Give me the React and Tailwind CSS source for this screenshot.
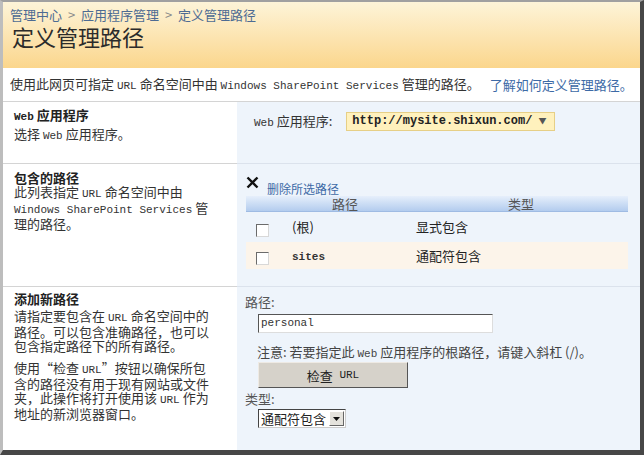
import React from 'react'

const L = ({ children, bold }) => (
  <span className={`font-['Liberation_Mono',monospace] text-[11px] ${bold ? 'font-bold' : ''}`}>{children}</span>
)

const Check = () => (
  <div className="w-[13px] h-[13px] bg-white border border-t-[#6b6b6b] border-l-[#6b6b6b] border-b-[#d8d8d8] border-r-[#d8d8d8]" />
)

function Section({ left, right, h, last }) {
  return (
    <div className={`flex ${h} ${last ? 'flex-1' : ''}`}>
      <div className={`w-[234px] pl-[11px] pr-2 ${last ? '' : 'border-b border-[#d4d4d4]'}`}>{left}</div>
      <div className={`flex-1 bg-[#eef4fb] ${last ? '' : 'border-b border-[#dbe2ec]'}`}>{right}</div>
    </div>
  )
}

export default function App() {
  return (
    <div className="w-[644px] h-[455px] bg-white flex flex-col overflow-hidden border-t-2 border-l-[3px] border-r-4 border-b-[5px] border-t-[#a0a0a0] border-l-[#bdbdbd] border-r-[#474747] border-b-[#474747] font-['Noto_Sans_CJK_SC',sans-serif] text-[13px] text-[#333]">
      <div className="h-[66px] px-[7px] pt-[4px] bg-gradient-to-b from-[#fdf4d8] to-[#fbd68c]">
        <div className="text-[13px] leading-[17px] text-[#4d6b93]">
          管理中心 <span className="text-[#8a8a8a] mx-[3px]">&gt;</span> 应用程序管理 <span className="text-[#8a8a8a] mx-[3px]">&gt;</span> 定义管理路径
        </div>
        <div className="text-[22px] leading-[26px] text-[#2b2b2b] pl-[2px]">定义管理路径</div>
      </div>

      <div className="h-[34px] flex items-center px-[7px] border-b border-[#d4d4d4] whitespace-nowrap">
        <span>
          使用此网页可指定 <L>URL</L> 命名空间中由 <L>Windows SharePoint Services</L> 管理的路径。
        </span>
        <span className="ml-[10px] text-[#3d6aa6]">了解如何定义管理路径。</span>
      </div>

      <Section
        h="h-[62px]"
        left={
          <div className="pt-[5px] leading-[15px]">
            <div className="font-bold text-[#222]"><L bold>Web</L> 应用程序</div>
            <div className="mt-[1px]">选择 <L>Web</L> 应用程序。</div>
          </div>
        }
        right={
          <div className="pl-[17px] pt-[9px] flex items-center">
            <span className="whitespace-nowrap"><L>Web</L> 应用程序:</span>
            <div className="ml-[14px] w-[209px] h-[19px] bg-[#fff1bd] border border-[#e6cf86] flex items-center pl-[5px] gap-[6px]">
              <span className="font-['Liberation_Mono',monospace] text-[12px] font-bold text-[#222]">http://mysite.shixun.com/</span>
              <span className="text-[8px] text-[#555]">▼</span>
            </div>
          </div>
        }
      />

      <Section
        h="h-[123px]"
        left={
          <div className="pt-[6px] leading-[14px]">
            <div className="font-bold text-[#222] leading-[15px]">包含的路径</div>
            <div>此列表指定 <L>URL</L> 命名空间中由</div>
            <div><L>Windows SharePoint Services</L> 管</div>
            <div>理的路径。</div>
          </div>
        }
        right={
          <div className="pl-[9px] pr-[12px] pt-[8px]">
            <div className="flex items-end h-[24px]">
              <svg width="13" height="13" viewBox="0 0 13 13" className="mb-[7px]">
                <path d="M1.5 1.5 L11.5 11.5 M11.5 1.5 L1.5 11.5" stroke="#111" strokeWidth="2.4" />
              </svg>
              <span className="ml-[8px] text-[12px] leading-[15px] text-[#3d6aa6]">删除所选路径</span>
            </div>
            <div className="flex h-[16px] items-center bg-gradient-to-b from-[#e6effb] to-[#b3ccee] border-b border-[#9fbbe3] text-[#555]">
              <div className="w-[30px]" />
              <div className="w-[138px] text-center">路径</div>
              <div className="flex-1 text-center">类型</div>
            </div>
            <div className="flex h-[30px] items-center">
              <div className="w-[30px] pl-[10px] pt-[6px]"><Check /></div>
              <div className="w-[138px] pl-[16px] text-[#222]">(根)</div>
              <div className="flex-1 pl-[2px] text-[#222]">显式包含</div>
            </div>
            <div className="flex h-[27px] items-center bg-[#fcf4ea]">
              <div className="w-[30px] pl-[10px] pt-[6px]"><Check /></div>
              <div className="w-[138px] pl-[16px]"><L bold>sites</L></div>
              <div className="flex-1 pl-[2px] text-[#222]">通配符包含</div>
            </div>
          </div>
        }
      />

      <Section
        last
        left={
          <div className="pt-[4px] leading-[14px]">
            <div className="font-bold text-[#222] leading-[15px] mb-[3px]">添加新路径</div>
            <div>请指定要包含在 <L>URL</L> 命名空间中的</div>
            <div>路径。可以包含准确路径，也可以</div>
            <div>包含指定路径下的所有路径。</div>
            <div className="mt-[8px]">使用“检查 <L>URL</L>”按钮以确保所包</div>
            <div>含的路径没有用于现有网站或文件</div>
            <div>夹，此操作将打开使用该 <L>URL</L> 作为</div>
            <div>地址的新浏览器窗口。</div>
          </div>
        }
        right={
          <div className="pl-[8px] pt-[7px] leading-[15px]">
            <div className="text-[#555]">路径:</div>
            <div className="ml-[13px] mt-[5px] w-[235px] h-[19px] bg-white border border-t-[#555] border-l-[#555] border-b-[#ddd] border-r-[#ddd] flex items-center pl-[2px]">
              <L>personal</L>
            </div>
            <div className="ml-[12px] mt-[11px] whitespace-nowrap text-[#444]">
              注意: 若要指定此 <L>Web</L> 应用程序的根路径，请键入斜杠 (/)。
            </div>
            <div className="ml-[13px] w-[150px] h-[26px] bg-[#d6d2ca] border border-t-[#eeeae4] border-l-[#eeeae4] border-b-[#555] border-r-[#555] flex items-center justify-center text-[#222]">
              检查 <L>&nbsp;URL</L>
            </div>
            <div className="mt-[3px] text-[#555]">类型:</div>
            <div className="ml-[13px] mt-[3px] w-[88px] h-[19px] bg-white border border-t-[#444] border-l-[#444] border-b-[#ccc] border-r-[#ccc] flex items-center pl-[2px] justify-between">
              <span className="text-[#222]">通配符包含</span>
              <span className="w-[15px] h-[15px] mr-[1px] bg-[#e4e2dc] border border-t-white border-l-white border-b-[#666] border-r-[#666] flex items-center justify-center">
                <svg width="7" height="4" viewBox="0 0 7 4"><path d="M0 0 H7 L3.5 4 Z" fill="#111" /></svg>
              </span>
            </div>
          </div>
        }
      />
    </div>
  )
}
